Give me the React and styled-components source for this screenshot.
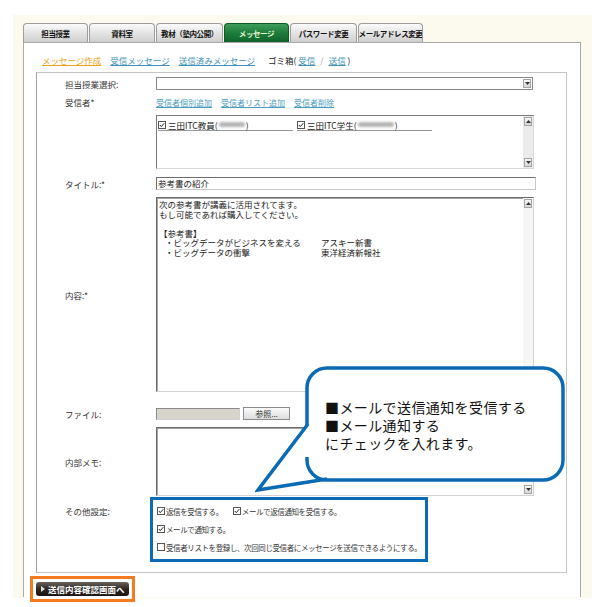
import React from 'react'
import styled, { createGlobalStyle } from 'styled-components'

const GlobalStyle = createGlobalStyle`
  html, body { margin:0; padding:0; background:#fff; }
  body { font-family:"Noto Sans CJK JP", "Noto Sans", sans-serif; color:#222; }
`

const tabs = [
  { label: '担当授業', w: 65 },
  { label: '資料室', w: 66 },
  { label: '教材（塾内公開）', w: 67 },
  { label: 'メッセージ', w: 65, active: true },
  { label: 'パスワード変更', w: 67 },
  { label: 'メールアドレス変更', w: 65 },
]

function Check({ on }) {
  return (
    <CheckSvg viewBox="0 0 8 8">
      <rect x="0.5" y="0.5" width="7" height="7" fill="#fff" stroke="#555" />
      {on && <path d="M1.8 4 L3.3 5.6 L6.3 2.2" fill="none" stroke="#222" strokeWidth="1" />}
    </CheckSvg>
  )
}

function Arrow({ down }) {
  return (
    <ArrowBtn>
      <svg width="5" height="3" viewBox="0 0 5 3">
        <path d={down ? 'M0 0 H5 L2.5 3 Z' : 'M0 3 H5 L2.5 0 Z'} fill="#333" />
      </svg>
    </ArrowBtn>
  )
}

function Scroll({ plain }) {
  return (
    <ScrollBar $plain={plain}>
      <Arrow />
      <Arrow down />
    </ScrollBar>
  )
}

function Callout() {
  return (
    <Bubble>
      <svg width="312" height="130" viewBox="0 0 312 130">
        <polygon points="54,58 3,126 72,116 54,116" fill="#fff" />
        <rect x="52" y="4" width="256" height="112" rx="20" fill="#fff" stroke="#0a6ab3" strokeWidth="3.5" />
        <rect x="49" y="61" width="8" height="32" fill="#fff" />
        <polyline points="53,60 3,126 72,115" fill="none" stroke="#0a6ab3" strokeWidth="3.5" strokeLinejoin="miter" />
      </svg>
      <BubbleText>
        <div>■メールで送信通知を受信する</div>
        <div>■メール通知する</div>
        <div>にチェックを入れます。</div>
      </BubbleText>
    </Bubble>
  )
}

export default function App() {
  return (
    <Page>
      <GlobalStyle />
      <Shell>
        <Tabs>
          {tabs.map(t => (
            <Tab key={t.label} $w={t.w} $active={t.active}>{t.label}</Tab>
          ))}
        </Tabs>
        <Box>
          <SubNav>
            <Current>メッセージ作成</Current>
            <NavLink>受信メッセージ</NavLink>
            <NavLink>送信済みメッセージ</NavLink>
            <Trash>
              ゴミ箱(&nbsp;<NavLink>受信</NavLink><Slash>/</Slash><NavLink>送信</NavLink>&nbsp;)
            </Trash>
          </SubNav>
          <Form>
            <Row $mt={0}>
              <Label>担当授業選択:</Label>
              <Select><Arrow down /></Select>
            </Row>
            <Row $mt={6}>
              <Label>受信者*</Label>
              <Links>
                <FieldLink>受信者個別追加</FieldLink>
                <FieldLink>受信者リスト追加</FieldLink>
                <FieldLink>受信者削除</FieldLink>
              </Links>
            </Row>
            <Row $mt={7}>
              <Label />
              <ListBox>
                <ListItems>
                  <Item><Check on />三田ITC教員(<Blur $w={26} />)</Item>
                  <Item><Check on />三田ITC学生(<Blur $w={36} />)</Item>
                </ListItems>
                <Scroll />
              </ListBox>
            </Row>
            <Row $mt={8}>
              <Label>タイトル:*</Label>
              <TextInput>参考書の紹介</TextInput>
            </Row>
            <Row $mt={7}>
              <Label>内容:*</Label>
              <TextArea $h={195}>
                <TextBody>
                  <div>次の参考書が講義に活用されてます。</div>
                  <div>もし可能であれば購入してください。</div>
                  <div>&nbsp;</div>
                  <div>【参考書】</div>
                  <BookRow><span>・ビッグデータがビジネスを変える</span><span>アスキー新書</span></BookRow>
                  <BookRow><span>・ビッグデータの衝撃</span><span>東洋経済新報社</span></BookRow>
                </TextBody>
                <Scroll plain />
              </TextArea>
            </Row>
            <Row $mt={15}>
              <Label>ファイル:</Label>
              <FileBox />
              <Browse>参照...</Browse>
            </Row>
            <Row $mt={7}>
              <Label>内部メモ:</Label>
              <TextArea $h={69}>
                <TextBody />
                <Scroll plain />
              </TextArea>
            </Row>
            <Row $mt={1} $top>
              <Label $offset={9}>その他設定:</Label>
              <Settings>
                <SetLine>
                  <Opt><Check on />返信を受信する。</Opt>
                  <Opt><Check on />メールで返信通知を受信する。</Opt>
                </SetLine>
                <SetLine><Opt><Check on />メールで通知する。</Opt></SetLine>
                <SetLine><Opt><Check />受信者リストを登録し、次回同じ受信者にメッセージを送信できるようにする。</Opt></SetLine>
              </Settings>
            </Row>
          </Form>
          <ButtonFrame>
            <SubmitButton>
              <svg width="4" height="6" viewBox="0 0 4 6"><path d="M0 0 L4 3 L0 6 Z" fill="#ddd" /></svg>
              送信内容確認画面へ
            </SubmitButton>
          </ButtonFrame>
        </Box>
      </Shell>
      <Callout />
    </Page>
  )
}

const Page = styled.div`
  position:relative;
  width:606px;
  height:607px;
  padding-top:15px;
  box-sizing:border-box;
  overflow:hidden;
`
const Shell = styled.div`
  margin-left:13px;
  width:579px;
  height:583px;
  box-sizing:border-box;
  padding:8px 11px 0 10px;
  background:#fcfaef;
`
const Tabs = styled.div`
  display:flex;
  gap:1px;
  height:19px;
`
const Tab = styled.div`
  width:${p => p.$w}px;
  box-sizing:border-box;
  border:1px solid ${p => (p.$active ? '#0e5a26' : '#9c9c9c')};
  border-bottom:none;
  border-radius:4px 4px 0 0;
  background:${p => (p.$active
    ? 'linear-gradient(#3d9c58, #1b7a3a 55%, #0f632b)'
    : 'linear-gradient(#fbfbfb, #e2e2e2 55%, #cfcfcf)')};
  color:${p => (p.$active ? '#e6f4cf' : '#111')};
  font-size:7.5px;
  font-weight:700;
  letter-spacing:-0.4px;
  display:flex;
  align-items:center;
  justify-content:center;
  white-space:nowrap;
  overflow:hidden;
`
const Box = styled.div`
  height:555px;
  box-sizing:border-box;
  border:1px solid #a9a9a9;
  border-bottom:none;
  background:#fff;
  padding:12px 13px 0 12px;
`
const SubNav = styled.div`
  display:flex;
  align-items:center;
  height:10px;
  margin-left:6px;
  font-size:8.5px;
  gap:9px;
`
const Current = styled.span`
  color:#eba21a;
  text-decoration:underline;
`
const NavLink = styled.span`
  color:#3f93b8;
  text-decoration:underline;
`
const Trash = styled.span`
  color:#222;
  margin-left:4px;
`
const Slash = styled.span`
  color:#aaa;
  margin:0 5px;
`
const Form = styled.div`
  margin-top:7px;
  border:1px solid #c4c4c4;
  border-left-color:#a2a2a2;
  padding:4px 0 10px 28px;
`
const Row = styled.div`
  display:flex;
  align-items:${p => (p.$top ? 'flex-start' : 'center')};
  margin-top:${p => p.$mt}px;
`
const Label = styled.div`
  width:91px;
  flex-shrink:0;
  font-size:8.5px;
  line-height:10px;
  color:#333;
  margin-top:${p => p.$offset || 0}px;
`
const Select = styled.div`
  width:377px;
  height:13px;
  box-sizing:border-box;
  border:1px solid #8a8a8a;
  background:#fff;
  display:flex;
  justify-content:flex-end;
  align-items:center;
  padding-right:1px;
`
const ArrowBtn = styled.div`
  width:8px;
  height:9px;
  box-sizing:border-box;
  border:1px solid #a5a5a5;
  background:linear-gradient(#f7f7f7, #d6d6d6);
  display:flex;
  align-items:center;
  justify-content:center;
`
const Links = styled.div`
  display:flex;
  gap:9px;
  height:12px;
  align-items:center;
`
const FieldLink = styled.span`
  font-size:8px;
  color:#4a9cc0;
  text-decoration:underline;
`
const ListBox = styled.div`
  width:378px;
  height:54px;
  box-sizing:border-box;
  border:1px solid;
  border-color:#7a7a7a #d8d8d8 #d8d8d8 #7a7a7a;
  display:flex;
`
const ListItems = styled.div`
  flex:1;
  display:flex;
  align-items:flex-start;
  gap:4px;
  padding:3px 0 0 1px;
`
const Item = styled.div`
  width:135px;
  height:11px;
  display:flex;
  align-items:center;
  gap:1px;
  font-size:8.5px;
  color:#222;
  border-bottom:1px solid #9a9a9a;
`
const CheckSvg = styled.svg`
  width:8px;
  height:8px;
  flex-shrink:0;
  margin-right:1px;
`
const Blur = styled.span`
  display:inline-block;
  width:${p => p.$w}px;
  height:5px;
  background:#b5b5b5;
  border-radius:3px;
  filter:blur(1.2px);
`
const ScrollBar = styled.div`
  width:10px;
  flex-shrink:0;
  box-sizing:border-box;
  padding:1px 1px 1px 0;
  background:${p => (p.$plain ? '#f6f6f6' : '#ebebeb')};
  display:flex;
  flex-direction:column;
  justify-content:space-between;
  align-items:flex-end;
`
const TextInput = styled.div`
  width:380px;
  height:13px;
  box-sizing:border-box;
  border:1px solid;
  border-color:#6e6e6e #c8c8c8 #c8c8c8 #6e6e6e;
  font-size:8.5px;
  line-height:11px;
  padding-left:1px;
  color:#222;
`
const TextArea = styled.div`
  width:378px;
  height:${p => p.$h}px;
  box-sizing:border-box;
  border:1px solid;
  border-color:#6a6a6a #d2d2d2 #d2d2d2 #6a6a6a;
  box-shadow:inset 1px 1px 0 #a5a5a5;
  display:flex;
  background:#fff;
`
const TextBody = styled.div`
  flex:1;
  padding:2px 0 0 2px;
  font-size:8.5px;
  line-height:9.6px;
  color:#222;
`
const BookRow = styled.div`
  display:grid;
  grid-template-columns:156px auto;
  padding-left:6px;
`
const FileBox = styled.div`
  width:84px;
  height:12px;
  box-sizing:border-box;
  border:1px solid;
  border-color:#8a8a8a #d0d0d0 #d0d0d0 #8a8a8a;
  background:#d7d4cb;
`
const Browse = styled.div`
  margin-left:3px;
  width:47px;
  height:13px;
  box-sizing:border-box;
  border:1px solid #8c8c8c;
  background:linear-gradient(#fbfbfb, #dedede);
  font-size:8px;
  color:#333;
  display:flex;
  align-items:center;
  justify-content:center;
`
const Settings = styled.div`
  margin-left:-6px;
  width:278px;
  height:65px;
  box-sizing:border-box;
  border:3px solid #0b6cb5;
  padding:6px 0 0 4px;
  display:flex;
  flex-direction:column;
  gap:8px;
`
const SetLine = styled.div`
  display:flex;
  gap:10px;
  height:10px;
  align-items:center;
`
const Opt = styled.span`
  display:flex;
  align-items:center;
  font-size:7.5px;
  color:#333;
  white-space:nowrap;
  letter-spacing:-0.4px;
`
const ButtonFrame = styled.div`
  display:inline-flex;
  margin:-3px 0 0 -6px;
  border:3px solid #f47b20;
  padding:3px;
  background:#fff;
`
const SubmitButton = styled.div`
  width:93px;
  height:14px;
  box-sizing:border-box;
  border-radius:3px;
  background:linear-gradient(#6a645e, #2c2723 50%, #1a1512);
  color:#fff;
  font-size:8.5px;
  font-weight:700;
  display:flex;
  align-items:center;
  gap:3px;
  padding-left:5px;
`
const Bubble = styled.div`
  position:absolute;
  left:255px;
  top:364px;
  width:312px;
  height:130px;
  svg { position:absolute; left:0; top:0; }
`
const BubbleText = styled.div`
  position:relative;
  padding:34px 0 0 70px;
  font-size:14px;
  line-height:18px;
  letter-spacing:0.4px;
  color:#111;
`
